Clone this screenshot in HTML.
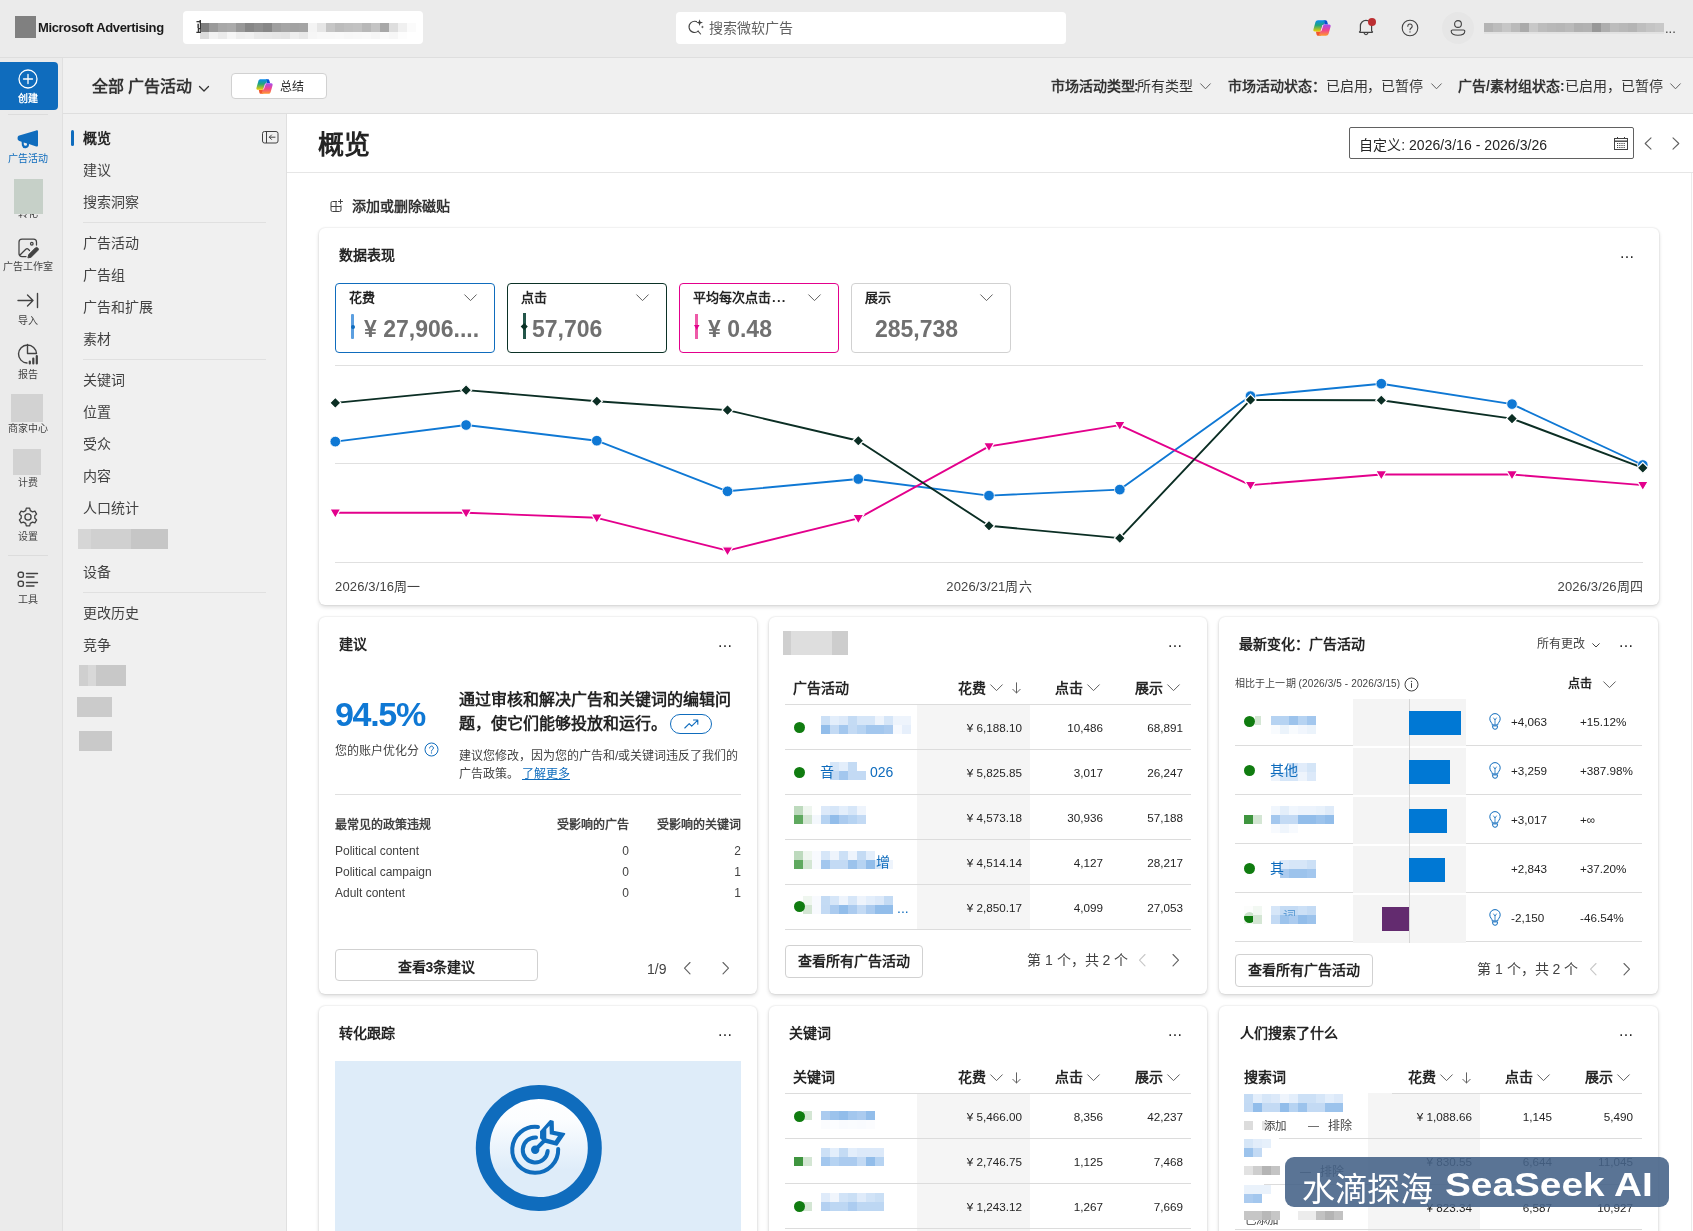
<!DOCTYPE html>
<html lang="zh-CN">
<head>
<meta charset="utf-8">
<title>Microsoft Advertising</title>
<style>
*{box-sizing:border-box;margin:0;padding:0}
html,body{width:1693px;height:1231px;overflow:hidden;background:#fff}
body{font-family:"Liberation Sans",sans-serif;color:#242424;font-size:14px;position:relative;will-change:transform}
.a{position:absolute}
.t{position:absolute;white-space:nowrap;line-height:1}
.b{font-weight:700}
svg{position:absolute;overflow:visible}
#topbar{left:0;top:0;width:1693px;height:58px;background:#ebebeb;border-bottom:1px solid #dedede}
#rail{left:0;top:58px;width:63px;height:1173px;background:#ebebeb;border-right:1px solid #e0e0e0}
#bar2{left:63px;top:58px;width:1630px;height:56px;background:#f0f0f0;border-bottom:1px solid #dedede}
#side{left:63px;top:114px;width:224px;height:1117px;background:#f0f0f0;border-right:1px solid #e0e0e0}
#main{left:287px;top:114px;width:1406px;height:1117px;background:#fff}
.nav{position:absolute;left:83px;font-size:14px;color:#424242;line-height:1;white-space:nowrap}
.blur{position:absolute;background:#cfcfcf}
.card{position:absolute;background:#fff;border-radius:6px;box-shadow:0 0 2px rgba(0,0,0,.14),0 2px 4px rgba(0,0,0,.14)}
.rl{position:absolute;font-size:10px;color:#424242;line-height:1;white-space:nowrap;text-align:center;width:63px;left:0}
.hl{position:absolute;height:1px;background:#e0e0e0}
.r{text-align:right}
.n12{font-size:12px;color:#242424}
</style>
</head>
<body>
<div id="topbar" class="a"></div>
<div id="rail" class="a"></div>
<div id="bar2" class="a"></div>
<div id="side" class="a"></div>
<div id="main" class="a"></div>
<div class="a" style="left:15px;top:16px;width:21px;height:22px;background:#808080"></div>
<div class="t b" style="left:38px;top:21px;font-size:13px;color:#1a1a1a;letter-spacing:-0.35px">Microsoft Advertising</div>
<div class="a" style="left:183px;top:11px;width:240px;height:33px;background:#fff;border-radius:4px"></div>
<div class="a" style="left:676px;top:12px;width:390px;height:32px;background:#fff;border-radius:4px"></div>
<svg style="left:687px;top:18px" width="18" height="18" viewBox="0 0 18 18" fill="none" stroke="#424242" stroke-width="1.1" stroke-linecap="round"><path d="M11.2 13.2 A5.6 5.6 0 1 1 9.5 3.6"/><path d="M11 13.2 L13.6 16"/><path d="M12.6 1.2 L13.4 3.8 L16 4.6 L13.4 5.4 L12.6 8 L11.8 5.4 L9.2 4.6 L11.8 3.8 Z" fill="#424242" stroke="none"/><path d="M15.4 7.4 L15.8 8.6 L17 9 L15.8 9.4 L15.4 10.6 L15 9.4 L13.8 9 L15 8.6 Z" fill="#424242" stroke="none"/></svg>
<div class="t" style="left:709px;top:21px;font-size:14px;color:#616161">搜索微软广告</div>
<svg style="left:0;top:0" width="1693" height="58"><rect x="200" y="23" width="9" height="9" fill="#7f7f7f"/><rect x="209" y="23" width="9" height="9" fill="#9a9a9a"/><rect x="218" y="23" width="9" height="9" fill="#a8a8a8"/><rect x="227" y="23" width="9" height="9" fill="#ababab"/><rect x="236" y="23" width="9" height="9" fill="#999999"/><rect x="245" y="23" width="9" height="9" fill="#878787"/><rect x="254" y="23" width="9" height="9" fill="#8f8f8f"/><rect x="263" y="23" width="9" height="9" fill="#878787"/><rect x="272" y="23" width="9" height="9" fill="#9f9f9f"/><rect x="281" y="23" width="9" height="9" fill="#a5a5a5"/><rect x="290" y="23" width="9" height="9" fill="#a2a2a2"/><rect x="299" y="23" width="9" height="9" fill="#a4a4a4"/><rect x="308" y="23" width="9" height="9" fill="#f4f4f4"/><rect x="317" y="23" width="9" height="9" fill="#e6e6e6"/><rect x="326" y="23" width="9" height="9" fill="#c6c6c6"/><rect x="335" y="23" width="9" height="9" fill="#bcbcbc"/><rect x="344" y="23" width="9" height="9" fill="#c0c0c0"/><rect x="353" y="23" width="9" height="9" fill="#c2c2c2"/><rect x="362" y="23" width="9" height="9" fill="#b8b8b8"/><rect x="371" y="23" width="9" height="9" fill="#c4c4c4"/><rect x="380" y="23" width="9" height="9" fill="#a8a8a8"/><rect x="389" y="23" width="9" height="9" fill="#dedede"/><rect x="398" y="23" width="9" height="9" fill="#f0f0f0"/><rect x="407" y="23" width="9" height="9" fill="#fbfbfb"/><rect x="200" y="32" width="9" height="7" fill="#dcdcdc"/><rect x="209" y="32" width="9" height="7" fill="#f2f2f2"/><rect x="218" y="32" width="9" height="7" fill="#ebebeb"/><rect x="227" y="32" width="9" height="7" fill="#f6f6f6"/><rect x="236" y="32" width="9" height="7" fill="#eeeeee"/><rect x="245" y="32" width="9" height="7" fill="#f0f0f0"/><rect x="254" y="32" width="9" height="7" fill="#e9e9e9"/><rect x="263" y="32" width="9" height="7" fill="#e8e8e8"/><rect x="272" y="32" width="9" height="7" fill="#e6e6e6"/><rect x="281" y="32" width="9" height="7" fill="#e4e4e4"/><rect x="290" y="32" width="9" height="7" fill="#eeeeee"/><rect x="299" y="32" width="9" height="7" fill="#e8e8e8"/><rect x="308" y="32" width="9" height="7" fill="#f6f6f6"/><rect x="317" y="32" width="9" height="7" fill="#f8f8f8"/><rect x="326" y="32" width="9" height="7" fill="#f8f8f8"/><rect x="335" y="32" width="9" height="7" fill="#f9f9f9"/><rect x="344" y="32" width="9" height="7" fill="#f7f7f7"/><rect x="353" y="32" width="9" height="7" fill="#f8f8f8"/><rect x="362" y="32" width="9" height="7" fill="#f9f9f9"/><rect x="371" y="32" width="9" height="7" fill="#f6f6f6"/><rect x="380" y="32" width="9" height="7" fill="#fafafa"/><rect x="389" y="32" width="9" height="7" fill="#f7f7f7"/><rect x="398" y="32" width="9" height="7" fill="#fdfdfd"/><rect x="407" y="32" width="9" height="7" fill="#ffffff"/><rect x="1484" y="23" width="9" height="9" fill="#b4b4b4"/><rect x="1493" y="23" width="9" height="9" fill="#bcbcbc"/><rect x="1502" y="23" width="9" height="9" fill="#c6c6c6"/><rect x="1511" y="23" width="9" height="9" fill="#bababa"/><rect x="1520" y="23" width="9" height="9" fill="#aaaaaa"/><rect x="1529" y="23" width="9" height="9" fill="#c8c8c8"/><rect x="1538" y="23" width="9" height="9" fill="#bcbcbc"/><rect x="1547" y="23" width="9" height="9" fill="#b8b8b8"/><rect x="1556" y="23" width="9" height="9" fill="#b6b6b6"/><rect x="1565" y="23" width="9" height="9" fill="#bababa"/><rect x="1574" y="23" width="9" height="9" fill="#b0b0b0"/><rect x="1583" y="23" width="9" height="9" fill="#b2b2b2"/><rect x="1592" y="23" width="9" height="9" fill="#989898"/><rect x="1601" y="23" width="9" height="9" fill="#aeaeae"/><rect x="1610" y="23" width="9" height="9" fill="#bcbcbc"/><rect x="1619" y="23" width="9" height="9" fill="#b8b8b8"/><rect x="1628" y="23" width="9" height="9" fill="#b4b4b4"/><rect x="1637" y="23" width="9" height="9" fill="#bebebe"/><rect x="1646" y="23" width="9" height="9" fill="#c4c4c4"/><rect x="1655" y="23" width="9" height="9" fill="#c8c8c8"/><rect x="1484" y="32" width="180" height="2" fill="#e2e2e2"/></svg>
<div class="t b" style="left:196px;top:20px;font-size:13px;color:#333;width:5px;overflow:hidden">蓝</div>
<!-- copilot -->
<svg style="left:1313px;top:20px" width="18" height="16" viewBox="0 0 18 16"><defs><linearGradient id="c1a" x1="0" y1="0" x2="0" y2="1"><stop offset="0" stop-color="#0a8cf0"/><stop offset=".45" stop-color="#22a67a"/><stop offset="1" stop-color="#f2cf00"/></linearGradient><linearGradient id="c1b" x1="0" y1="0" x2="0" y2="1"><stop offset="0" stop-color="#a64df0"/><stop offset=".5" stop-color="#f0458c"/><stop offset="1" stop-color="#ff9a2e"/></linearGradient></defs>
<path d="M10.5 0.300 H12.600 C13.600 0.300 14 1 14.300 2 L15 4.600 H11.500 Z" fill="#0a4fd0"/>
<path d="M5 15.800 C4.200 15.800 3.700 15.200 3.500 14.300 L2.900 11.400 H7.200 L7.800 15.800 Z" fill="#f2562a"/>
<path d="M5 0.300 H11 C11.800 0.300 12 1 11.700 1.900 L9 10 C8.700 11 8 11.500 7 11.500 H1.800 C0.700 11.500 0.100 10.600 0.400 9.500 L2.400 2.300 C2.800 1 3.700 0.300 5 0.300 Z" fill="url(#c1a)"/>
<path d="M13 15.800 H7 C6.200 15.800 6 15.100 6.300 14.200 L9 6.100 C9.300 5.100 10 4.600 11 4.600 H16.200 C17.300 4.600 17.900 5.500 17.600 6.600 L15.600 13.800 C15.200 15.100 14.300 15.800 13 15.800 Z" fill="url(#c1b)"/>
<path d="M9.600 5.200 L10.600 4.600 L8.400 10.900 L7.400 11.500 Z" fill="#fff" opacity=".95"/></svg>
<!-- bell -->
<svg style="left:1357px;top:19px" width="18" height="20" viewBox="0 0 18 20" fill="none" stroke="#424242" stroke-width="1.2" stroke-linejoin="round"><path d="M3.400 11.800 V7 a5.600 5.600 0 0 1 11.200 0 v4.800 l.9 1 q.2 .5 -.4 .5 H2.900 q-.6 0 -.4 -.5 Z"/><path d="M7 14 q2 3.500 4 0"/></svg>
<div class="a" style="left:1368px;top:18px;width:8px;height:8px;border-radius:50%;background:#bc2f32"></div>
<!-- help -->
<svg style="left:1401px;top:19px" width="18" height="18" viewBox="0 0 18 18" fill="none" stroke="#424242" stroke-width="1.1"><circle cx="9" cy="9" r="7.800"/><path d="M6.800 7.200 a2.200 2.200 0 1 1 3.400 1.800 c-.8 .5 -1.200 .9 -1.200 1.800" stroke-linecap="round"/><circle cx="9" cy="12.900" r=".7" fill="#424242" stroke="none"/></svg>
<!-- avatar -->
<div class="a" style="left:1442px;top:12px;width:32px;height:32px;border-radius:50%;background:#e6e6e6"></div>
<svg style="left:1450px;top:19px" width="16" height="18" viewBox="0 0 16 18" fill="none" stroke="#424242" stroke-width="1.1"><circle cx="8" cy="5" r="3.400"/><path d="M2.500 11 h11 a1.300 1.300 0 0 1 1.300 1.300 c0 2.600 -2.800 4 -6.800 4 s-6.800 -1.400 -6.800 -4 A1.300 1.300 0 0 1 2.500 11Z"/></svg>
<div class="t" style="left:1665px;top:22px;font-size:13px;color:#424242">...</div>
<!-- bar2 -->
<div class="a" style="left:0;top:62px;width:58px;height:48px;background:#0f6cbd;border-radius:0 4px 4px 0"></div>
<svg style="left:18px;top:69px" width="20" height="20" viewBox="0 0 20 20" fill="none" stroke="#fff" stroke-width="1.300" stroke-linecap="round"><circle cx="10" cy="10" r="9"/><path d="M10 5.500 V14.500 M5.500 10 H14.500"/></svg>
<div class="t b" style="left:0;width:56px;text-align:center;top:94px;font-size:10px;color:#fff">创建</div>
<div class="t b" style="left:92px;top:79px;font-size:16px;color:#333">全部 广告活动</div>
<svg style="left:198px;top:85px" width="12" height="8" viewBox="0 0 12 8" fill="none" stroke="#333" stroke-width="1.300" stroke-linecap="round" stroke-linejoin="round"><path d="M1.500 1.500 L6 6 L10.500 1.500"/></svg>
<div class="a" style="left:231px;top:73px;width:96px;height:26px;background:#fff;border:1px solid #d1d1d1;border-radius:4px"></div>
<svg style="left:256px;top:79px" width="17" height="15" viewBox="0 0 18 16"><defs><linearGradient id="c2a" x1="0" y1="0" x2="0" y2="1"><stop offset="0" stop-color="#0a8cf0"/><stop offset=".45" stop-color="#22a67a"/><stop offset="1" stop-color="#f2cf00"/></linearGradient><linearGradient id="c2b" x1="0" y1="0" x2="0" y2="1"><stop offset="0" stop-color="#a64df0"/><stop offset=".5" stop-color="#f0458c"/><stop offset="1" stop-color="#ff9a2e"/></linearGradient></defs>
<path d="M10.5 0.300 H12.600 C13.600 0.300 14 1 14.300 2 L15 4.600 H11.500 Z" fill="#0a4fd0"/>
<path d="M5 15.800 C4.200 15.800 3.700 15.200 3.500 14.300 L2.900 11.400 H7.200 L7.800 15.800 Z" fill="#f2562a"/>
<path d="M5 0.300 H11 C11.800 0.300 12 1 11.700 1.900 L9 10 C8.700 11 8 11.500 7 11.500 H1.800 C0.700 11.500 0.100 10.600 0.400 9.500 L2.400 2.300 C2.800 1 3.700 0.300 5 0.300 Z" fill="url(#c2a)"/>
<path d="M13 15.800 H7 C6.200 15.800 6 15.100 6.300 14.200 L9 6.100 C9.300 5.100 10 4.600 11 4.600 H16.200 C17.300 4.600 17.900 5.500 17.600 6.600 L15.600 13.800 C15.200 15.100 14.300 15.800 13 15.800 Z" fill="url(#c2b)"/>
<path d="M9.600 5.200 L10.600 4.600 L8.400 10.900 L7.400 11.500 Z" fill="#fff" opacity=".95"/></svg>
<div class="t" style="left:280px;top:81px;font-size:12px;color:#242424">总结</div>
<div class="t" style="left:1051px;top:79px;font-size:14px;color:#333"><span class="b">市场活动类型<span style="margin-left:-1px;margin-right:-1.300px">:</span></span>所有类型</div>
<svg style="left:1200px;top:83px" width="11" height="7" viewBox="0 0 11 7" fill="none" stroke="#616161" stroke-width="1" stroke-linecap="round" stroke-linejoin="round"><path d="M.7 .8 L5.500 5.800 L10.300 .8"/></svg>
<div class="t" style="left:1228px;top:79px;font-size:14px;color:#333"><span class="b">市场活动状态：</span><span style="letter-spacing:-.2px">已启用，已暂停</span></div>
<svg style="left:1431px;top:83px" width="11" height="7" viewBox="0 0 11 7" fill="none" stroke="#616161" stroke-width="1" stroke-linecap="round" stroke-linejoin="round"><path d="M.7 .8 L5.500 5.800 L10.300 .8"/></svg>
<div class="t" style="left:1458px;top:79px;font-size:14px;color:#333"><span class="b">广告/素材组状态:</span>已启用，已暂停</div>
<svg style="left:1670px;top:83px" width="11" height="7" viewBox="0 0 11 7" fill="none" stroke="#616161" stroke-width="1" stroke-linecap="round" stroke-linejoin="round"><path d="M.7 .8 L5.500 5.800 L10.300 .8"/></svg>

<div class="hl" style="left:8px;top:114px;width:40px;background:#dcdcdc"></div>
<!-- megaphone -->
<svg style="left:17px;top:130px" width="22" height="18" viewBox="0 0 22 18"><path d="M19.200 0.400 C20.200 0 21 0.600 21 1.600 V15.200 C21 16.200 20.200 16.800 19.200 16.400 L12 14 V14.600 A3.600 3.600 0 0 1 4.900 15.400 L4.600 11.700 L2.300 11 C1.300 10.700 0.600 9.800 0.600 8.800 V7.800 C0.600 6.800 1.300 5.900 2.300 5.600 Z M6.700 12.400 L6.900 14.700 A1.600 1.600 0 0 0 10 14.400 V13.400 Z" fill="#0f6cbd" fill-rule="evenodd"/></svg>
<div class="rl" style="top:154px;color:#0f6cbd;width:56px">广告活动</div>
<div class="t" style="left:18px;top:209px;font-size:10px;color:#424242">转化</div>
<div class="a" style="left:14px;top:179px;width:29px;height:35px;background:#c6d0c8"></div>
<!-- ad studio -->
<svg style="left:17px;top:237px" width="22" height="22" viewBox="0 0 22 22" fill="none" stroke="#424242" stroke-width="1.250" stroke-linecap="round" stroke-linejoin="round"><path d="M9 19.500 H5 A3 3 0 0 1 2 16.500 V5 A3 3 0 0 1 5 2 H16.500 A3 3 0 0 1 19.500 5 V8"/><circle cx="14.800" cy="6.700" r="1.300"/><path d="M3 18 L8.800 12.300 A1.800 1.800 0 0 1 11.300 12.300 L12.500 13.500"/><path d="M11 20.500 L11.800 17.500 L18.300 11 A1.700 1.700 0 0 1 20.800 13.500 L14.300 20 Z" fill="#424242" stroke-width="1"/></svg>
<div class="rl" style="top:262px;width:56px">广告工作室</div>
<!-- import -->
<svg style="left:17px;top:292px" width="22" height="18" viewBox="0 0 22 18" fill="none" stroke="#424242" stroke-width="1.400" stroke-linecap="round" stroke-linejoin="round"><path d="M1 8.500 H16 M10.500 3 L16 8.500 L10.500 14 M20.500 1.500 V15.500"/></svg>
<div class="rl" style="top:316px;width:56px">导入</div>
<!-- report -->
<svg style="left:17px;top:343px" width="23" height="23" viewBox="0 0 23 23" fill="none" stroke="#424242" stroke-width="1.400" stroke-linecap="round" stroke-linejoin="round"><path d="M10 20 A9 9 0 1 1 19.500 10.500 H10.500 V1.500"/><path d="M12.800 20.500 V18.500 M16.300 20.500 V15.500 M19.800 20.500 V13" stroke-width="2.200"/></svg>
<div class="rl" style="top:370px;width:56px">报告</div>
<div class="a" style="left:11px;top:394px;width:32px;height:28px;background:#d2d2d2"></div>
<div class="rl" style="top:424px;width:56px">商家中心</div>
<div class="a" style="left:13px;top:449px;width:28px;height:26px;background:#d2d2d2"></div>
<div class="rl" style="top:478px;width:56px">计费</div>
<!-- gear -->
<svg style="left:18px;top:507px" width="20" height="20" viewBox="0 0 20 20" fill="none" stroke="#424242" stroke-width="1.300" stroke-linejoin="round"><path d="M8.300 1.200 L7.700 3.600 L5.500 4.900 L3.100 4.200 L1.400 7.100 L3.200 8.800 V11.200 L1.400 12.900 L3.100 15.800 L5.500 15.100 L7.700 16.400 L8.300 18.800 H11.700 L12.300 16.400 L14.500 15.100 L16.900 15.800 L18.600 12.900 L16.800 11.200 V8.800 L18.600 7.100 L16.900 4.200 L14.500 4.900 L12.300 3.600 L11.700 1.200 Z"/><circle cx="10" cy="10" r="3.100"/></svg>
<div class="rl" style="top:532px;width:56px">设置</div>
<div class="hl" style="left:8px;top:555px;width:40px;background:#dcdcdc"></div>
<!-- tools -->
<svg style="left:17px;top:571px" width="22" height="18" viewBox="0 0 22 18" fill="none" stroke="#424242" stroke-width="1.400" stroke-linecap="round"><rect x="1.200" y="1.200" width="5.200" height="5.200" rx="1.800"/><rect x="1.200" y="10.200" width="5.200" height="5.200" rx="1.800"/><path d="M9.500 2.500 H20.500 M9.500 6 H17 M9.500 11.500 H20.500 M9.500 15 H17"/></svg>
<div class="rl" style="top:595px;width:56px">工具</div>

<div class="a" style="left:71px;top:130px;width:3px;height:16px;border-radius:2px;background:#0f6cbd"></div>
<div class="nav b" style="top:131px;color:#242424">概览</div>
<svg style="left:262px;top:131px" width="17" height="13" viewBox="0 0 17 13" fill="none" stroke="#424242" stroke-width="1"><rect x=".5" y=".5" width="15.500" height="11.500" rx="2"/><path d="M4.500 .5 V12"/><path d="M13 6.200 H7.500 M9.500 4 L7.300 6.200 L9.500 8.400" stroke-linecap="round" stroke-linejoin="round"/></svg>
<div class="nav" style="top:163px">建议</div>
<div class="nav" style="top:195px">搜索洞察</div>
<div class="hl" style="left:83px;top:222px;width:183px"></div>
<div class="nav" style="top:236px">广告活动</div>
<div class="nav" style="top:268px">广告组</div>
<div class="nav" style="top:300px">广告和扩展</div>
<div class="nav" style="top:332px">素材</div>
<div class="hl" style="left:83px;top:359px;width:183px"></div>
<div class="nav" style="top:373px">关键词</div>
<div class="nav" style="top:405px">位置</div>
<div class="nav" style="top:437px">受众</div>
<div class="nav" style="top:469px">内容</div>
<div class="nav" style="top:501px">人口统计</div>
<div class="a" style="left:78px;top:529px;width:90px;height:20px;background:linear-gradient(90deg,#d6d6d6 0 14%,#d0d0d0 14% 59%,#c6c6c6 59%)"></div>
<div class="nav" style="top:565px">设备</div>
<div class="hl" style="left:83px;top:592px;width:183px"></div>
<div class="nav" style="top:606px">更改历史</div>
<div class="nav" style="top:638px">竞争</div>
<div class="a" style="left:79px;top:665px;width:47px;height:21px;background:linear-gradient(90deg,#cfcfcf 0 19%,#d8d8d8 19% 36%,#c8c8c8 36%)"></div>
<div class="a" style="left:77px;top:697px;width:35px;height:20px;background:#cbcbcb"></div>
<div class="a" style="left:79px;top:731px;width:33px;height:20px;background:#c9c9c9"></div>

<div class="t b" style="left:318px;top:132px;font-size:26px;color:#242424">概览</div>
<div class="hl" style="left:287px;top:172px;width:1406px;background:#e6e6e6"></div>
<div class="a" style="left:1349px;top:127px;width:285px;height:32px;border:1px solid #616161;border-radius:2px;background:#fff"></div>
<div class="t" style="left:1359px;top:137.500px;font-size:14px;letter-spacing:.05px;color:#242424">自定义: 2026/3/16 - 2026/3/26</div>
<svg style="left:1614px;top:137px" width="14" height="13" viewBox="0 0 14 13" fill="none" stroke="#424242" stroke-width="1"><rect x=".5" y="1.500" width="13" height="11"/><path d="M.5 4.200 H13.500" stroke-width="1.400"/><path d="M3.500 0 V2 M10.500 0 V2"/><path d="M3 6.500 H11 M3 8.500 H11 M3 10.500 H11" stroke-dasharray="1.200 1" stroke-width="1.100"/></svg>
<svg style="left:1644px;top:137px" width="8" height="13" viewBox="0 0 8 13" fill="none" stroke="#616161" stroke-width="1.100" stroke-linecap="round" stroke-linejoin="round"><path d="M7 .8 L1.200 6.500 L7 12.200"/></svg>
<svg style="left:1672px;top:137px" width="8" height="13" viewBox="0 0 8 13" fill="none" stroke="#616161" stroke-width="1.100" stroke-linecap="round" stroke-linejoin="round"><path d="M1 .8 L6.800 6.500 L1 12.200"/></svg>
<svg style="left:330px;top:199px" width="14" height="14" viewBox="0 0 14 14" fill="none" stroke="#424242" stroke-width="1"><path d="M7 2.500 H2.500 A1.500 1.500 0 0 0 1 4 V11 A1.500 1.500 0 0 0 2.500 12.500 H9.500 A1.500 1.500 0 0 0 11 11 V6.500" /><path d="M1 7.500 H11 M6 2.500 V12.500"/><path d="M10.500 0.500 V4.500 M8.500 2.500 H12.500" stroke-linecap="round"/></svg>
<div class="t b" style="left:352px;top:199px;font-size:14px;color:#333">添加或删除磁贴</div>
<div class="a" style="left:1691px;top:173px;width:1px;height:1058px;background:#ececec"></div>

<div class="card" style="left:319px;top:228px;width:1340px;height:377px"></div>
<div class="t b" style="left:339px;top:248px;font-size:14px;color:#242424">数据表现</div>
<div class="t" style="left:1620px;top:245px;font-size:16px;color:#242424;letter-spacing:.3px">...</div>
<div class="a" style="left:335px;top:283px;width:160px;height:70px;border:1px solid #0f6cbd;border-radius:4px;background:#fff"></div>
<div class="t b" style="left:349px;top:291px;font-size:13px;color:#242424">花费</div>
<svg style="left:464px;top:294px" width="13" height="8" viewBox="0 0 13 8" fill="none" stroke="#616161" stroke-width="1" stroke-linecap="round" stroke-linejoin="round"><path d="M.7 .8 L6.500 6.600 L12.300 .8"/></svg>
<div class="t b" style="left:364px;top:318px;font-size:23px;color:#707070">¥ 27,906....</div>
<div class="a" style="left:507px;top:283px;width:160px;height:70px;border:1px solid #0b3226;border-radius:4px;background:#fff"></div>
<div class="t b" style="left:521px;top:291px;font-size:13px;color:#242424">点击</div>
<svg style="left:636px;top:294px" width="13" height="8" viewBox="0 0 13 8" fill="none" stroke="#616161" stroke-width="1" stroke-linecap="round" stroke-linejoin="round"><path d="M.7 .8 L6.500 6.600 L12.300 .8"/></svg>
<div class="t b" style="left:532px;top:318px;font-size:23px;color:#707070">57,706</div>
<div class="a" style="left:679px;top:283px;width:160px;height:70px;border:1px solid #e3008c;border-radius:4px;background:#fff"></div>
<div class="t b" style="left:693px;top:291px;font-size:13px;color:#242424">平均每次点击<span style="letter-spacing:1.300px;margin-left:1px">...</span></div>
<svg style="left:808px;top:294px" width="13" height="8" viewBox="0 0 13 8" fill="none" stroke="#616161" stroke-width="1" stroke-linecap="round" stroke-linejoin="round"><path d="M.7 .8 L6.500 6.600 L12.300 .8"/></svg>
<div class="t b" style="left:708px;top:318px;font-size:23px;color:#707070">¥ 0.48</div>
<div class="a" style="left:851px;top:283px;width:160px;height:70px;border:1px solid #d1d1d1;border-radius:4px;background:#fff"></div>
<div class="t b" style="left:865px;top:291px;font-size:13px;color:#242424">展示</div>
<svg style="left:980px;top:294px" width="13" height="8" viewBox="0 0 13 8" fill="none" stroke="#616161" stroke-width="1" stroke-linecap="round" stroke-linejoin="round"><path d="M.7 .8 L6.500 6.600 L12.300 .8"/></svg>
<div class="t b" style="left:875px;top:318px;font-size:23px;color:#707070">285,738</div>
<div class="a" style="left:351px;top:314px;width:3px;height:25px;background:#5c9fe0;border-radius:1px"></div><div class="a" style="left:350.500px;top:324.500px;width:4px;height:4px;border-radius:50%;background:#0f6cbd"></div>
<div class="a" style="left:523px;top:313px;width:2.500px;height:26px;background:#24564a"></div><div class="a" style="left:522px;top:324px;width:4.500px;height:4.500px;background:#0b3226;transform:rotate(45deg)"></div>
<div class="a" style="left:695px;top:314px;width:2.500px;height:25px;background:#ee5aa8"></div><svg style="left:693.500px;top:325px" width="5.500" height="5" viewBox="0 0 8 7"><path d="M0 0 H8 L4 7 Z" fill="#e3008c"/></svg>
<svg style="left:0;top:0" width="1693" height="1231" viewBox="0 0 1693 1231"><path d="M335 365.5 H1643" stroke="#e0e0e0" stroke-width="1"/><path d="M335 463.5 H1643" stroke="#e0e0e0" stroke-width="1"/><path d="M335 562.5 H1643" stroke="#e0e0e0" stroke-width="1"/><polyline fill="none" stroke="#0f78d4" stroke-width="1.9" stroke-linejoin="round" points="335.3,441.6 466.1,425.0 596.8,440.7 727.5,491.3 858.3,479.0 989.0,495.6 1119.8,489.6 1250.5,396.1 1381.3,383.7 1512.0,404.1 1642.8,465.0"/><polyline fill="none" stroke="#e3008c" stroke-width="1.9" stroke-linejoin="round" points="335.3,512.7 466.1,512.7 596.8,517.8 727.5,550.6 858.3,518.3 989.0,446.4 1119.8,425.1 1250.5,485.1 1381.3,474.5 1512.0,474.5 1642.8,485.1"/><polyline fill="none" stroke="#0b2e24" stroke-width="1.9" stroke-linejoin="round" points="335.3,402.9 466.1,390.1 596.8,401.2 727.5,410.1 858.3,440.7 989.0,525.8 1119.8,538.1 1250.5,399.9 1381.3,400.3 1512.0,418.6 1642.8,467.9"/><circle cx="335.3" cy="441.6" r="5.3" fill="#0f78d4" stroke="#fff" stroke-width=".8"/><circle cx="466.1" cy="425.0" r="5.3" fill="#0f78d4" stroke="#fff" stroke-width=".8"/><circle cx="596.8" cy="440.7" r="5.3" fill="#0f78d4" stroke="#fff" stroke-width=".8"/><circle cx="727.5" cy="491.3" r="5.3" fill="#0f78d4" stroke="#fff" stroke-width=".8"/><circle cx="858.3" cy="479.0" r="5.3" fill="#0f78d4" stroke="#fff" stroke-width=".8"/><circle cx="989.0" cy="495.6" r="5.3" fill="#0f78d4" stroke="#fff" stroke-width=".8"/><circle cx="1119.8" cy="489.6" r="5.3" fill="#0f78d4" stroke="#fff" stroke-width=".8"/><circle cx="1250.5" cy="396.1" r="5.3" fill="#0f78d4" stroke="#fff" stroke-width=".8"/><circle cx="1381.3" cy="383.7" r="5.3" fill="#0f78d4" stroke="#fff" stroke-width=".8"/><circle cx="1512.0" cy="404.1" r="5.3" fill="#0f78d4" stroke="#fff" stroke-width=".8"/><circle cx="1642.8" cy="465.0" r="5.3" fill="#0f78d4" stroke="#fff" stroke-width=".8"/><path d="M329.8 508.9 h11 l-5.500 9.300 Z" fill="#e3008c" stroke="#fff" stroke-width="1.2"/><path d="M460.6 508.9 h11 l-5.500 9.300 Z" fill="#e3008c" stroke="#fff" stroke-width="1.2"/><path d="M591.3 514.0 h11 l-5.500 9.300 Z" fill="#e3008c" stroke="#fff" stroke-width="1.2"/><path d="M722.0 546.8 h11 l-5.500 9.300 Z" fill="#e3008c" stroke="#fff" stroke-width="1.2"/><path d="M852.8 514.5 h11 l-5.500 9.300 Z" fill="#e3008c" stroke="#fff" stroke-width="1.2"/><path d="M983.5 442.6 h11 l-5.500 9.300 Z" fill="#e3008c" stroke="#fff" stroke-width="1.2"/><path d="M1114.3 421.3 h11 l-5.500 9.300 Z" fill="#e3008c" stroke="#fff" stroke-width="1.2"/><path d="M1245.0 481.3 h11 l-5.500 9.300 Z" fill="#e3008c" stroke="#fff" stroke-width="1.2"/><path d="M1375.8 470.7 h11 l-5.500 9.300 Z" fill="#e3008c" stroke="#fff" stroke-width="1.2"/><path d="M1506.5 470.7 h11 l-5.500 9.300 Z" fill="#e3008c" stroke="#fff" stroke-width="1.2"/><path d="M1637.3 481.3 h11 l-5.500 9.300 Z" fill="#e3008c" stroke="#fff" stroke-width="1.2"/><path d="M329.8 402.9 l5.500 -5.500 l5.500 5.500 l-5.500 5.500 Z" fill="#0b2e24" stroke="#fff" stroke-width="1.3"/><path d="M460.6 390.1 l5.500 -5.500 l5.500 5.500 l-5.500 5.500 Z" fill="#0b2e24" stroke="#fff" stroke-width="1.3"/><path d="M591.3 401.2 l5.500 -5.500 l5.500 5.500 l-5.500 5.500 Z" fill="#0b2e24" stroke="#fff" stroke-width="1.3"/><path d="M722.0 410.1 l5.500 -5.500 l5.500 5.500 l-5.500 5.500 Z" fill="#0b2e24" stroke="#fff" stroke-width="1.3"/><path d="M852.8 440.7 l5.500 -5.500 l5.500 5.500 l-5.500 5.500 Z" fill="#0b2e24" stroke="#fff" stroke-width="1.3"/><path d="M983.5 525.8 l5.500 -5.500 l5.500 5.500 l-5.500 5.500 Z" fill="#0b2e24" stroke="#fff" stroke-width="1.3"/><path d="M1114.3 538.1 l5.500 -5.500 l5.500 5.500 l-5.500 5.500 Z" fill="#0b2e24" stroke="#fff" stroke-width="1.3"/><path d="M1245.0 399.9 l5.500 -5.500 l5.500 5.500 l-5.500 5.500 Z" fill="#0b2e24" stroke="#fff" stroke-width="1.3"/><path d="M1375.8 400.3 l5.500 -5.500 l5.500 5.500 l-5.500 5.500 Z" fill="#0b2e24" stroke="#fff" stroke-width="1.3"/><path d="M1506.5 418.6 l5.500 -5.500 l5.500 5.500 l-5.500 5.500 Z" fill="#0b2e24" stroke="#fff" stroke-width="1.3"/><path d="M1637.3 467.9 l5.500 -5.500 l5.500 5.500 l-5.500 5.500 Z" fill="#0b2e24" stroke="#fff" stroke-width="1.3"/></svg>
<div class="t" style="left:335px;top:580px;font-size:13px;letter-spacing:.15px;color:#424242">2026/3/16周一</div>
<div class="t" style="left:889px;width:200px;text-align:center;top:580px;font-size:13px;letter-spacing:.15px;color:#424242">2026/3/21周六</div>
<div class="t r" style="left:1443px;width:200px;top:580px;font-size:13px;letter-spacing:.15px;color:#424242">2026/3/26周四</div>

<div class="card" style="left:319px;top:617px;width:438px;height:377px"></div>
<div class="t b" style="left:339px;top:637px;font-size:14px;color:#242424">建议</div>
<div class="t" style="left:718px;top:634px;font-size:16px;color:#242424;letter-spacing:.3px">...</div>
<div class="t b" style="left:335px;top:697px;font-size:34px;color:#0f78d4;letter-spacing:-1.300px">94.5%</div>
<div class="t" style="left:335px;top:745px;font-size:12px;color:#424242">您的账户优化分</div>
<svg style="left:424px;top:742px" width="15" height="15" viewBox="0 0 15 15" fill="none" stroke="#0f6cbd" stroke-width="1"><circle cx="7.500" cy="7.500" r="6.500"/><path d="M5.600 6 a1.900 1.900 0 1 1 2.900 1.600 c-.7 .4 -1 .8 -1 1.500" stroke-linecap="round"/><circle cx="7.500" cy="10.900" r=".65" fill="#0f6cbd" stroke="none"/></svg>
<div class="a b" style="left:459px;top:688px;width:290px;font-size:16px;line-height:24px;color:#242424;white-space:nowrap">通过审核和解决广告和关键词的编辑问<br>题，使它们能够投放和运行。</div>
<div class="a" style="left:670px;top:714px;width:42px;height:20px;border:1px solid #0f6cbd;border-radius:10px"></div>
<svg style="left:684px;top:719px" width="15" height="10" viewBox="0 0 15 10" fill="none" stroke="#0f6cbd" stroke-width="1.100" stroke-linecap="round" stroke-linejoin="round"><path d="M.8 9 L5.200 4.600 L7.700 7.100 L13.500 1.300 M9.500 1 H13.800 V5.300"/></svg>
<div class="a" style="left:459px;top:747px;width:290px;font-size:12px;line-height:18px;color:#424242;white-space:nowrap">建议您修改，因为您的广告和/或关键词违反了我们的<br>广告政策。<span style="color:#0f6cbd;text-decoration:underline;margin-left:3px">了解更多</span></div>
<div class="hl" style="left:335px;top:794px;width:406px"></div>
<div class="t b" style="left:335px;top:819px;font-size:12px;color:#424242">最常见的政策违规</div>
<div class="t b r" style="left:529px;width:100px;top:819px;font-size:12px;color:#424242">受影响的广告</div>
<div class="t b r" style="left:641px;width:100px;top:819px;font-size:12px;color:#424242">受影响的关键词</div>
<div class="t" style="left:335px;top:845px;font-size:12px;color:#424242">Political content</div>
<div class="t" style="left:335px;top:866px;font-size:12px;color:#424242">Political campaign</div>
<div class="t" style="left:335px;top:887px;font-size:12px;color:#424242">Adult content</div>
<div class="t r" style="left:529px;width:100px;top:845px;font-size:12px;color:#424242">0</div>
<div class="t r" style="left:529px;width:100px;top:866px;font-size:12px;color:#424242">0</div>
<div class="t r" style="left:529px;width:100px;top:887px;font-size:12px;color:#424242">0</div>
<div class="t r" style="left:641px;width:100px;top:845px;font-size:12px;color:#424242">2</div>
<div class="t r" style="left:641px;width:100px;top:866px;font-size:12px;color:#424242">1</div>
<div class="t r" style="left:641px;width:100px;top:887px;font-size:12px;color:#424242">1</div>
<div class="a" style="left:335px;top:949px;width:203px;height:32px;border:1px solid #d1d1d1;border-radius:4px;background:#fff"></div>
<div class="t b" style="left:335px;width:203px;text-align:center;top:960px;font-size:14px;color:#242424">查看3条建议</div>
<div class="t" style="left:647px;top:962px;font-size:14px;color:#424242">1/9</div>
<svg style="left:683px;top:961px" width="9" height="15" viewBox="0 0 9 15" fill="none" stroke="#616161" stroke-width="1.100" stroke-linecap="round" stroke-linejoin="round"><path d="M7 1.500 L1.500 7.200 L7 12.900"/></svg>
<svg style="left:721px;top:961px" width="9" height="15" viewBox="0 0 9 15" fill="none" stroke="#616161" stroke-width="1.100" stroke-linecap="round" stroke-linejoin="round"><path d="M2 1.500 L7.500 7.200 L2 12.900"/></svg>

<div class="card" style="left:769px;top:617px;width:438px;height:377px"></div>
<div class="a" style="left:783px;top:631px;width:65px;height:24px;background:linear-gradient(90deg,#cfcfcf 0 13%,#dedede 13% 75%,#cdcdcd 75%)"></div>
<div class="t " style="left:1168px;top:634px;font-size:16px;color:#242424;letter-spacing:.3px">...</div>
<div class="t b" style="left:793px;top:681px;font-size:14px;color:#242424;">广告活动</div>
<div class="t b" style="left:958px;top:681px;font-size:14px;color:#242424;">花费</div>
<svg style="left:990px;top:684px" width="13" height="8" viewBox="0 0 13 8" fill="none" stroke="#616161" stroke-width="1" stroke-linecap="round" stroke-linejoin="round"><path d="M.7 .8 L6.500 6.600 L12.300 .8"/></svg>
<svg style="left:1012px;top:682px" width="9" height="12" viewBox="0 0 9 12" fill="none" stroke="#616161" stroke-width="1" stroke-linecap="round" stroke-linejoin="round"><path d="M4.500 .8 V11 M.8 7.300 L4.500 11 L8.200 7.300"/></svg>
<div class="t b" style="left:1055px;top:681px;font-size:14px;color:#242424;">点击</div>
<svg style="left:1087px;top:684px" width="13" height="8" viewBox="0 0 13 8" fill="none" stroke="#616161" stroke-width="1" stroke-linecap="round" stroke-linejoin="round"><path d="M.7 .8 L6.500 6.600 L12.300 .8"/></svg>
<div class="t b" style="left:1135px;top:681px;font-size:14px;color:#242424;">展示</div>
<svg style="left:1167px;top:684px" width="13" height="8" viewBox="0 0 13 8" fill="none" stroke="#616161" stroke-width="1" stroke-linecap="round" stroke-linejoin="round"><path d="M.7 .8 L6.500 6.600 L12.300 .8"/></svg>
<div class="a" style="left:917px;top:704px;width:113px;height:225px;background:#f5f5f5"></div>
<div class="hl" style="left:785px;top:704px;width:406px;background:#dcdcdc"></div>
<div class="hl" style="left:785px;top:749px;width:406px;background:#dcdcdc"></div>
<div class="hl" style="left:785px;top:794px;width:406px;background:#dcdcdc"></div>
<div class="hl" style="left:785px;top:839px;width:406px;background:#dcdcdc"></div>
<div class="hl" style="left:785px;top:884px;width:406px;background:#dcdcdc"></div>
<div class="hl" style="left:785px;top:929px;width:406px;background:#dcdcdc"></div>
<div class="t r " style="left:902px;width:120px;top:722px;font-size:11.7px;color:#242424">¥ 6,188.10</div>
<div class="t r " style="left:983px;width:120px;top:722px;font-size:11.7px;color:#242424">10,486</div>
<div class="t r " style="left:1063px;width:120px;top:722px;font-size:11.7px;color:#242424">68,891</div>
<div class="t r " style="left:902px;width:120px;top:767px;font-size:11.7px;color:#242424">¥ 5,825.85</div>
<div class="t r " style="left:983px;width:120px;top:767px;font-size:11.7px;color:#242424">3,017</div>
<div class="t r " style="left:1063px;width:120px;top:767px;font-size:11.7px;color:#242424">26,247</div>
<div class="t r " style="left:902px;width:120px;top:812px;font-size:11.7px;color:#242424">¥ 4,573.18</div>
<div class="t r " style="left:983px;width:120px;top:812px;font-size:11.7px;color:#242424">30,936</div>
<div class="t r " style="left:1063px;width:120px;top:812px;font-size:11.7px;color:#242424">57,188</div>
<div class="t r " style="left:902px;width:120px;top:857px;font-size:11.7px;color:#242424">¥ 4,514.14</div>
<div class="t r " style="left:983px;width:120px;top:857px;font-size:11.7px;color:#242424">4,127</div>
<div class="t r " style="left:1063px;width:120px;top:857px;font-size:11.7px;color:#242424">28,217</div>
<div class="t r " style="left:902px;width:120px;top:902px;font-size:11.7px;color:#242424">¥ 2,850.17</div>
<div class="t r " style="left:983px;width:120px;top:902px;font-size:11.7px;color:#242424">4,099</div>
<div class="t r " style="left:1063px;width:120px;top:902px;font-size:11.7px;color:#242424">27,053</div>
<svg style="left:0;top:0" width="1693" height="1231"><rect x="821" y="716" width="9" height="9" fill="#cce0f6"/><rect x="830" y="716" width="9" height="9" fill="#e3eefb"/><rect x="839" y="716" width="9" height="9" fill="#dce9f9"/><rect x="848" y="716" width="9" height="9" fill="#c4dbf4"/><rect x="857" y="716" width="9" height="9" fill="#d6e6f8"/><rect x="866" y="716" width="9" height="9" fill="#d6e6f8"/><rect x="875" y="716" width="9" height="9" fill="#eef4fc"/><rect x="884" y="716" width="9" height="9" fill="#d6e6f8"/><rect x="821" y="725" width="9" height="9" fill="#92bdea"/><rect x="830" y="725" width="9" height="9" fill="#c3daf4"/><rect x="839" y="725" width="9" height="9" fill="#a3c7ee"/><rect x="848" y="725" width="9" height="9" fill="#c3daf4"/><rect x="857" y="725" width="9" height="9" fill="#b6d3f2"/><rect x="866" y="725" width="9" height="9" fill="#a3c7ee"/><rect x="875" y="725" width="9" height="9" fill="#a3c7ee"/><rect x="884" y="725" width="9" height="9" fill="#abcbef"/><rect x="893" y="716" width="9" height="9" fill="#eef4fc"/><rect x="902" y="716" width="9" height="9" fill="#eef4fc"/><rect x="893" y="725" width="9" height="9" fill="#f6f9fe"/><rect x="902" y="725" width="9" height="9" fill="#e6effb"/><rect x="830" y="762" width="9" height="9" fill="#d6e6f8"/><rect x="839" y="762" width="9" height="9" fill="#e3eefb"/><rect x="848" y="762" width="9" height="9" fill="#c4dbf4"/><rect x="857" y="762" width="9" height="9" fill="#c4dbf4"/><rect x="830" y="771" width="9" height="9" fill="#c3daf4"/><rect x="839" y="771" width="9" height="9" fill="#a3c7ee"/><rect x="848" y="771" width="9" height="9" fill="#c3daf4"/><rect x="857" y="771" width="9" height="9" fill="#c3daf4"/><rect x="857" y="762" width="9" height="9" fill="#fff"/><rect x="794" y="806" width="9" height="9" fill="#bddabd"/><rect x="803" y="806" width="9" height="9" fill="#eff6ef"/><rect x="794" y="815" width="9" height="9" fill="#5fa95f"/><rect x="803" y="815" width="9" height="9" fill="#d4e6d4"/><rect x="812" y="815" width="9" height="9" fill="#f4f8fd"/><rect x="821" y="806" width="9" height="9" fill="#dce9f9"/><rect x="830" y="806" width="9" height="9" fill="#d6e6f8"/><rect x="839" y="806" width="9" height="9" fill="#e3eefb"/><rect x="848" y="806" width="9" height="9" fill="#d6e6f8"/><rect x="857" y="806" width="9" height="9" fill="#eef4fc"/><rect x="821" y="815" width="9" height="9" fill="#b6d3f2"/><rect x="830" y="815" width="9" height="9" fill="#92bdea"/><rect x="839" y="815" width="9" height="9" fill="#abcbef"/><rect x="848" y="815" width="9" height="9" fill="#b6d3f2"/><rect x="857" y="815" width="9" height="9" fill="#c3daf4"/><rect x="794" y="851" width="9" height="9" fill="#bddabd"/><rect x="803" y="851" width="9" height="9" fill="#eff6ef"/><rect x="794" y="860" width="9" height="9" fill="#5fa95f"/><rect x="803" y="860" width="9" height="9" fill="#d4e6d4"/><rect x="812" y="851" width="9" height="18" fill="#f8fafe"/><rect x="821" y="851" width="9" height="9" fill="#d6e6f8"/><rect x="830" y="851" width="9" height="9" fill="#eef4fc"/><rect x="839" y="851" width="9" height="9" fill="#cce0f6"/><rect x="848" y="851" width="9" height="9" fill="#eef4fc"/><rect x="857" y="851" width="9" height="9" fill="#c4dbf4"/><rect x="866" y="851" width="9" height="9" fill="#e3eefb"/><rect x="821" y="860" width="9" height="9" fill="#a3c7ee"/><rect x="830" y="860" width="9" height="9" fill="#c3daf4"/><rect x="839" y="860" width="9" height="9" fill="#c3daf4"/><rect x="848" y="860" width="9" height="9" fill="#9cc3ec"/><rect x="857" y="860" width="9" height="9" fill="#b6d3f2"/><rect x="866" y="860" width="9" height="9" fill="#92bdea"/><rect x="875" y="860" width="9" height="9" fill="#d6e6f8"/><rect x="884" y="860" width="9" height="9" fill="#eef4fc"/><rect x="803" y="896" width="9" height="9" fill="#eff6ef"/><rect x="803" y="905" width="9" height="9" fill="#d4e6d4"/><rect x="812" y="896" width="9" height="18" fill="#f8fafe"/><rect x="821" y="896" width="9" height="9" fill="#c4dbf4"/><rect x="830" y="896" width="9" height="9" fill="#d6e6f8"/><rect x="839" y="896" width="9" height="9" fill="#eef4fc"/><rect x="848" y="896" width="9" height="9" fill="#d6e6f8"/><rect x="857" y="896" width="9" height="9" fill="#eef4fc"/><rect x="866" y="896" width="9" height="9" fill="#e3eefb"/><rect x="875" y="896" width="9" height="9" fill="#dce9f9"/><rect x="884" y="896" width="9" height="9" fill="#c4dbf4"/><rect x="821" y="905" width="9" height="9" fill="#c3daf4"/><rect x="830" y="905" width="9" height="9" fill="#abcbef"/><rect x="839" y="905" width="9" height="9" fill="#92bdea"/><rect x="848" y="905" width="9" height="9" fill="#abcbef"/><rect x="857" y="905" width="9" height="9" fill="#c3daf4"/><rect x="866" y="905" width="9" height="9" fill="#abcbef"/><rect x="875" y="905" width="9" height="9" fill="#92bdea"/><rect x="884" y="905" width="9" height="9" fill="#92bdea"/></svg>
<div class="a" style="left:794px;top:722px;width:11px;height:11px;border-radius:50%;background:#107c10"></div>
<div class="a" style="left:794px;top:767px;width:11px;height:11px;border-radius:50%;background:#107c10"></div>
<div class="t " style="left:820px;top:765px;font-size:14px;color:#0f6cbd;">音</div>
<div class="t " style="left:870px;top:765px;font-size:14px;color:#0f6cbd;">026</div>
<div class="t " style="left:876px;top:855px;font-size:14px;color:#0f6cbd;">增</div>
<div class="a" style="left:794px;top:901px;width:11px;height:11px;border-radius:50%;background:#107c10"></div>
<div class="t " style="left:897px;top:901px;font-size:14px;color:#0f6cbd;">...</div>
<div class="a" style="left:785px;top:945px;width:138px;height:33px;border:1px solid #d1d1d1;border-radius:4px;background:#fff"></div>
<div class="t b" style="left:798px;top:954px;font-size:14px;color:#242424;font-weight:600">查看所有广告活动</div>
<div class="t " style="left:1027px;top:953px;font-size:14px;color:#424242;">第 1 个，共 2 个</div>
<svg style="left:1138px;top:953px" width="9" height="15" viewBox="0 0 9 15" fill="none" stroke="#c7c7c7" stroke-width="1.100" stroke-linecap="round" stroke-linejoin="round"><path d="M7 1.500 L1.500 7.200 L7 12.900"/></svg>
<svg style="left:1171px;top:953px" width="9" height="15" viewBox="0 0 9 15" fill="none" stroke="#616161" stroke-width="1.100" stroke-linecap="round" stroke-linejoin="round"><path d="M2 1.500 L7.500 7.200 L2 12.900"/></svg>

<div class="card" style="left:1219px;top:617px;width:439px;height:377px"></div>
<div class="t b" style="left:1239px;top:637px;font-size:14px;color:#242424;">最新变化：广告活动</div>
<div class="t " style="left:1537px;top:638px;font-size:12px;color:#424242;">所有更改</div>
<svg style="left:1592px;top:643px" width="8" height="5" viewBox="0 0 8 5" fill="none" stroke="#424242" stroke-width="1" stroke-linecap="round" stroke-linejoin="round"><path d="M.7 .7 L4 4 L7.300 .7"/></svg>
<div class="t " style="left:1619px;top:634px;font-size:16px;color:#242424;letter-spacing:.3px">...</div>
<div class="t " style="left:1235px;top:679px;font-size:10px;color:#424242;letter-spacing:.12px">相比于上一期 (2026/3/5 - 2026/3/15)</div>
<svg style="left:1404px;top:677px" width="15" height="15" viewBox="0 0 15 15" fill="none" stroke="#424242" stroke-width="1"><circle cx="7.500" cy="7.500" r="6.500"/><path d="M7.500 6.500 V10.500" stroke-linecap="round"/><circle cx="7.500" cy="4.500" r=".7" fill="#424242" stroke="none"/></svg>
<div class="t b" style="left:1568px;top:678px;font-size:12px;color:#242424;">点击</div>
<svg style="left:1603px;top:681px" width="13" height="8" viewBox="0 0 13 8" fill="none" stroke="#616161" stroke-width="1" stroke-linecap="round" stroke-linejoin="round"><path d="M.7 .8 L6.500 6.600 L12.300 .8"/></svg>
<div class="a" style="left:1353px;top:699px;width:113px;height:47px;background:#f4f4f4"></div>
<div class="a" style="left:1353px;top:748px;width:113px;height:47px;background:#f4f4f4"></div>
<div class="a" style="left:1353px;top:797px;width:113px;height:47px;background:#f4f4f4"></div>
<div class="a" style="left:1353px;top:846px;width:113px;height:47px;background:#f4f4f4"></div>
<div class="a" style="left:1353px;top:895px;width:113px;height:48px;background:#f4f4f4"></div>
<div class="a" style="left:1409px;top:699px;width:1px;height:244px;background:#d6d6d6"></div>
<div class="hl" style="left:1235px;top:745px;width:118px;background:#dcdcdc"></div>
<div class="hl" style="left:1466px;top:745px;width:176px;background:#dcdcdc"></div>
<div class="hl" style="left:1235px;top:794px;width:118px;background:#dcdcdc"></div>
<div class="hl" style="left:1466px;top:794px;width:176px;background:#dcdcdc"></div>
<div class="hl" style="left:1235px;top:843px;width:118px;background:#dcdcdc"></div>
<div class="hl" style="left:1466px;top:843px;width:176px;background:#dcdcdc"></div>
<div class="hl" style="left:1235px;top:892px;width:118px;background:#dcdcdc"></div>
<div class="hl" style="left:1466px;top:892px;width:176px;background:#dcdcdc"></div>
<div class="hl" style="left:1235px;top:941px;width:118px;background:#dcdcdc"></div>
<div class="hl" style="left:1466px;top:941px;width:176px;background:#dcdcdc"></div>
<div class="a" style="left:1409px;top:711px;width:52px;height:24px;background:#0078d4"></div>
<div class="a" style="left:1409px;top:760px;width:41px;height:24px;background:#0078d4"></div>
<div class="a" style="left:1409px;top:809px;width:38px;height:24px;background:#0078d4"></div>
<div class="a" style="left:1409px;top:858px;width:36px;height:24px;background:#0078d4"></div>
<div class="a" style="left:1382px;top:907px;width:27px;height:24px;background:#632b6f"></div>
<svg style="left:1489px;top:713px" width="12" height="17" viewBox="0 0 12 17" fill="none" stroke="#0f6cbd" stroke-width="1" stroke-linecap="round" stroke-linejoin="round"><path d="M3.300 11.500 C3.300 9.800 .8 8.800 .8 5.800 A5.200 5.200 0 0 1 11.200 5.800 C11.200 8.800 8.700 9.800 8.700 11.500 Z"/><path d="M3.500 12.900 H8.500 V13.800 A2.500 2.500 0 0 1 3.500 13.800 Z"/><path d="M4.600 5 L6 7 L7.400 5 M6 7 V11" stroke-width=".8"/></svg>
<div class="t " style="left:1511px;top:716px;font-size:11.7px;color:#242424;">+4,063</div>
<div class="t " style="left:1580px;top:716px;font-size:11.7px;color:#242424;">+15.12%</div>
<svg style="left:1489px;top:762px" width="12" height="17" viewBox="0 0 12 17" fill="none" stroke="#0f6cbd" stroke-width="1" stroke-linecap="round" stroke-linejoin="round"><path d="M3.300 11.500 C3.300 9.800 .8 8.800 .8 5.800 A5.200 5.200 0 0 1 11.200 5.800 C11.200 8.800 8.700 9.800 8.700 11.500 Z"/><path d="M3.500 12.900 H8.500 V13.800 A2.500 2.500 0 0 1 3.500 13.800 Z"/><path d="M4.600 5 L6 7 L7.400 5 M6 7 V11" stroke-width=".8"/></svg>
<div class="t " style="left:1511px;top:765px;font-size:11.7px;color:#242424;">+3,259</div>
<div class="t " style="left:1580px;top:765px;font-size:11.7px;color:#242424;">+387.98%</div>
<svg style="left:1489px;top:811px" width="12" height="17" viewBox="0 0 12 17" fill="none" stroke="#0f6cbd" stroke-width="1" stroke-linecap="round" stroke-linejoin="round"><path d="M3.300 11.500 C3.300 9.800 .8 8.800 .8 5.800 A5.200 5.200 0 0 1 11.200 5.800 C11.200 8.800 8.700 9.800 8.700 11.500 Z"/><path d="M3.500 12.900 H8.500 V13.800 A2.500 2.500 0 0 1 3.500 13.800 Z"/><path d="M4.600 5 L6 7 L7.400 5 M6 7 V11" stroke-width=".8"/></svg>
<div class="t " style="left:1511px;top:814px;font-size:11.7px;color:#242424;">+3,017</div>
<div class="t " style="left:1580px;top:814px;font-size:11.7px;color:#242424;">+∞</div>
<div class="t " style="left:1511px;top:863px;font-size:11.7px;color:#242424;">+2,843</div>
<div class="t " style="left:1580px;top:863px;font-size:11.7px;color:#242424;">+37.20%</div>
<svg style="left:1489px;top:909px" width="12" height="17" viewBox="0 0 12 17" fill="none" stroke="#0f6cbd" stroke-width="1" stroke-linecap="round" stroke-linejoin="round"><path d="M3.300 11.500 C3.300 9.800 .8 8.800 .8 5.800 A5.200 5.200 0 0 1 11.200 5.800 C11.200 8.800 8.700 9.800 8.700 11.500 Z"/><path d="M3.500 12.900 H8.500 V13.800 A2.500 2.500 0 0 1 3.500 13.800 Z"/><path d="M4.600 5 L6 7 L7.400 5 M6 7 V11" stroke-width=".8"/></svg>
<div class="t " style="left:1511px;top:912px;font-size:11.7px;color:#242424;">-2,150</div>
<div class="t " style="left:1580px;top:912px;font-size:11.7px;color:#242424;">-46.54%</div>
<svg style="left:0;top:0" width="1693" height="1231"><rect x="1255" y="716" width="6" height="9" fill="#d4e6d4"/><rect x="1271" y="716" width="9" height="9" fill="#b6d3f2"/><rect x="1280" y="716" width="9" height="9" fill="#b6d3f2"/><rect x="1289" y="716" width="9" height="9" fill="#9cc3ec"/><rect x="1298" y="716" width="9" height="9" fill="#b6d3f2"/><rect x="1307" y="716" width="9" height="9" fill="#a3c7ee"/><rect opacity=".4" x="1271" y="725" width="9" height="9" fill="#eef4fc"/><rect opacity=".4" x="1280" y="725" width="9" height="9" fill="#cce0f6"/><rect opacity=".4" x="1289" y="725" width="9" height="9" fill="#eef4fc"/><rect opacity=".4" x="1298" y="725" width="9" height="9" fill="#dce9f9"/><rect opacity=".4" x="1307" y="725" width="9" height="9" fill="#cce0f6"/><rect opacity=".85" x="1289" y="763" width="9" height="9" fill="#c4dbf4"/><rect opacity=".85" x="1298" y="763" width="9" height="9" fill="#dce9f9"/><rect opacity=".85" x="1307" y="763" width="9" height="9" fill="#cce0f6"/><rect x="1271" y="772" width="9" height="9" fill="#eef4fc"/><rect x="1280" y="772" width="9" height="9" fill="#d6e6f8"/><rect x="1289" y="772" width="9" height="9" fill="#d6e6f8"/><rect x="1298" y="772" width="9" height="9" fill="#eef4fc"/><rect x="1307" y="772" width="9" height="9" fill="#dce9f9"/><rect x="1244" y="815" width="9" height="9" fill="#3f953f"/><rect x="1253" y="815" width="9" height="9" fill="#d4e6d4"/><rect x="1271" y="806" opacity=".55" width="9" height="9" fill="#e3eefb"/><rect x="1280" y="806" opacity=".55" width="9" height="9" fill="#cce0f6"/><rect x="1289" y="806" opacity=".55" width="9" height="9" fill="#e3eefb"/><rect x="1298" y="806" opacity=".55" width="9" height="9" fill="#dce9f9"/><rect x="1307" y="806" opacity=".55" width="9" height="9" fill="#dce9f9"/><rect x="1316" y="806" opacity=".55" width="9" height="9" fill="#d6e6f8"/><rect x="1325" y="806" opacity=".55" width="9" height="9" fill="#c4dbf4"/><rect x="1271" y="815" width="9" height="9" fill="#a3c7ee"/><rect x="1280" y="815" width="9" height="9" fill="#c3daf4"/><rect x="1289" y="815" width="9" height="9" fill="#c3daf4"/><rect x="1298" y="815" width="9" height="9" fill="#92bdea"/><rect x="1307" y="815" width="9" height="9" fill="#92bdea"/><rect x="1316" y="815" width="9" height="9" fill="#9cc3ec"/><rect x="1325" y="815" width="9" height="9" fill="#92bdea"/><rect opacity=".45" x="1271" y="824" width="9" height="9" fill="#eef4fc"/><rect opacity=".45" x="1280" y="824" width="9" height="9" fill="#dce9f9"/><rect opacity=".45" x="1289" y="824" width="9" height="9" fill="#eef4fc"/><rect x="1280" y="860" width="9" height="9" fill="#dce9f9"/><rect x="1289" y="860" width="9" height="9" fill="#d6e6f8"/><rect x="1298" y="860" width="9" height="9" fill="#d6e6f8"/><rect x="1307" y="860" width="9" height="9" fill="#cce0f6"/><rect x="1280" y="869" width="9" height="9" fill="#abcbef"/><rect x="1289" y="869" width="9" height="9" fill="#9cc3ec"/><rect x="1298" y="869" width="9" height="9" fill="#9cc3ec"/><rect x="1307" y="869" width="9" height="9" fill="#a3c7ee"/><rect x="1244" y="906" width="9" height="18" fill="#eef5ee" opacity=".8"/><rect x="1253" y="906" width="9" height="9" fill="#eff6ef"/><rect x="1253" y="915" width="9" height="9" fill="#d4e6d4"/><rect x="1271" y="906" width="9" height="9" fill="#d6e6f8"/><rect x="1280" y="906" width="9" height="9" fill="#c4dbf4"/><rect x="1289" y="906" width="9" height="9" fill="#c4dbf4"/><rect x="1298" y="906" width="9" height="9" fill="#cce0f6"/><rect x="1307" y="906" width="9" height="9" fill="#c4dbf4"/><rect x="1271" y="915" width="9" height="9" fill="#c3daf4"/><rect x="1280" y="915" width="9" height="9" fill="#9cc3ec"/><rect x="1289" y="915" width="9" height="9" fill="#abcbef"/><rect x="1298" y="915" width="9" height="9" fill="#92bdea"/><rect x="1307" y="915" width="9" height="9" fill="#9cc3ec"/></svg>
<div class="a" style="left:1244px;top:716px;width:11px;height:11px;border-radius:50%;background:#107c10"></div>
<div class="a" style="left:1244px;top:765px;width:11px;height:11px;border-radius:50%;background:#107c10"></div>
<div class="t " style="left:1270px;top:763px;font-size:14px;color:#0f6cbd;">其他</div>
<div class="a" style="left:1244px;top:863px;width:11px;height:11px;border-radius:50%;background:#107c10"></div>
<div class="t " style="left:1270px;top:861px;font-size:14px;color:#0f6cbd;">其</div>
<div class="a" style="left:1244px;top:912px;width:11px;height:11px;border-radius:50%;background:#107c10"></div>
<div class="a" style="left:1243px;top:906px;width:10px;height:10px;background:rgba(255,255,255,.78)"></div><div class="a" style="left:1253px;top:906px;width:9px;height:9px;background:#f2f8f2"></div><div class="a" style="left:1253px;top:915px;width:9px;height:9px;background:#d4e6d4"></div>
<div class="t " style="left:1283px;top:909px;font-size:13px;color:#0f6cbd;opacity:.55;height:7px;overflow:hidden">词</div>
<div class="a" style="left:1235px;top:954px;width:138px;height:33px;border:1px solid #d1d1d1;border-radius:4px;background:#fff"></div>
<div class="t b" style="left:1248px;top:963px;font-size:14px;color:#242424;font-weight:600">查看所有广告活动</div>
<div class="t " style="left:1477px;top:962px;font-size:14px;color:#424242;">第 1 个，共 2 个</div>
<svg style="left:1589px;top:962px" width="9" height="15" viewBox="0 0 9 15" fill="none" stroke="#c7c7c7" stroke-width="1.100" stroke-linecap="round" stroke-linejoin="round"><path d="M7 1.500 L1.500 7.200 L7 12.900"/></svg>
<svg style="left:1622px;top:962px" width="9" height="15" viewBox="0 0 9 15" fill="none" stroke="#616161" stroke-width="1.100" stroke-linecap="round" stroke-linejoin="round"><path d="M2 1.500 L7.500 7.200 L2 12.900"/></svg>

<div class="card" style="left:319px;top:1006px;width:438px;height:260px"></div>
<div class="t b" style="left:339px;top:1026px;font-size:14px;color:#242424">转化跟踪</div>
<div class="t" style="left:718px;top:1023px;font-size:16px;color:#242424;letter-spacing:.3px">...</div>
<div class="a" style="left:335px;top:1061px;width:406px;height:170px;background:#deecf9"></div>
<svg style="left:0;top:0" width="1693" height="1231"><defs><linearGradient id="tg" x1="0" y1="0" x2="0" y2="1"><stop offset="0" stop-color="#ffffff"/><stop offset=".25" stop-color="#fbfdff"/><stop offset=".7" stop-color="#deecf9"/><stop offset="1" stop-color="#deecf9"/></linearGradient></defs>
<circle cx="538.8" cy="1148" r="56" fill="url(#tg)" stroke="#0f6cbd" stroke-width="14"/>
<g fill="none" stroke="#0f6cbd" stroke-width="4" stroke-linecap="round">
<path d="M538 1127 A23 23 0 1 0 558.2 1149"/>
<path d="M536 1137.500 A12.500 12.500 0 1 0 547.700 1151"/>
<path d="M535.2 1149.8 L548 1137" />
</g>
<circle cx="535.2" cy="1149.8" r="4.200" fill="#0f6cbd"/>
<path d="M550.3 1120.8 L553 1121.500 L553.2 1131.500 L564.500 1133.800 L556.800 1145 L545 1142 L540.800 1138 L540.800 1131.500 Z" fill="#0f6cbd" stroke="#0f6cbd" stroke-width="1.500" stroke-linejoin="round"/>
<path d="M546.300 1129 L549.500 1125.800 L549.800 1134.300 L558 1136 L554.800 1140.800 L546.300 1138.600 Z" fill="#e9f2fb"/>
</svg>

<div class="card" style="left:769px;top:1006px;width:438px;height:260px"></div>
<div class="t b" style="left:789px;top:1026px;font-size:14px;color:#242424;">关键词</div>
<div class="t " style="left:1168px;top:1023px;font-size:16px;color:#242424;letter-spacing:.3px">...</div>
<div class="t b" style="left:793px;top:1070px;font-size:14px;color:#242424;">关键词</div>
<div class="t b" style="left:958px;top:1070px;font-size:14px;color:#242424;">花费</div>
<svg style="left:990px;top:1074px" width="13" height="8" viewBox="0 0 13 8" fill="none" stroke="#616161" stroke-width="1" stroke-linecap="round" stroke-linejoin="round"><path d="M.7 .8 L6.500 6.600 L12.300 .8"/></svg>
<svg style="left:1012px;top:1072px" width="9" height="12" viewBox="0 0 9 12" fill="none" stroke="#616161" stroke-width="1" stroke-linecap="round" stroke-linejoin="round"><path d="M4.500 .8 V11 M.8 7.300 L4.500 11 L8.200 7.300"/></svg>
<div class="t b" style="left:1055px;top:1070px;font-size:14px;color:#242424;">点击</div>
<svg style="left:1087px;top:1074px" width="13" height="8" viewBox="0 0 13 8" fill="none" stroke="#616161" stroke-width="1" stroke-linecap="round" stroke-linejoin="round"><path d="M.7 .8 L6.500 6.600 L12.300 .8"/></svg>
<div class="t b" style="left:1135px;top:1070px;font-size:14px;color:#242424;">展示</div>
<svg style="left:1167px;top:1074px" width="13" height="8" viewBox="0 0 13 8" fill="none" stroke="#616161" stroke-width="1" stroke-linecap="round" stroke-linejoin="round"><path d="M.7 .8 L6.500 6.600 L12.300 .8"/></svg>
<div class="a" style="left:917px;top:1093px;width:113px;height:138px;background:#f5f5f5"></div>
<div class="hl" style="left:785px;top:1093px;width:406px;background:#dcdcdc"></div>
<div class="hl" style="left:785px;top:1138px;width:406px;background:#dcdcdc"></div>
<div class="hl" style="left:785px;top:1183px;width:406px;background:#dcdcdc"></div>
<div class="hl" style="left:785px;top:1228px;width:406px;background:#dcdcdc"></div>
<svg style="left:0;top:0" width="1693" height="1231"><rect x="803" y="1111" width="9" height="9" fill="#d4e6d4"/><rect x="821" y="1111" width="9" height="9" fill="#abcbef"/><rect x="830" y="1111" width="9" height="9" fill="#9cc3ec"/><rect x="839" y="1111" width="9" height="9" fill="#92bdea"/><rect x="848" y="1111" width="9" height="9" fill="#a3c7ee"/><rect x="857" y="1111" width="9" height="9" fill="#abcbef"/><rect x="866" y="1111" width="9" height="9" fill="#92bdea"/><rect opacity=".15" x="821" y="1120" width="9" height="9" fill="#e3eefb"/><rect opacity=".15" x="830" y="1120" width="9" height="9" fill="#eef4fc"/><rect opacity=".15" x="839" y="1120" width="9" height="9" fill="#d6e6f8"/><rect opacity=".15" x="848" y="1120" width="9" height="9" fill="#dce9f9"/><rect opacity=".15" x="857" y="1120" width="9" height="9" fill="#d6e6f8"/><rect opacity=".15" x="866" y="1120" width="9" height="9" fill="#e3eefb"/><rect x="794" y="1157" width="9" height="9" fill="#3f953f"/><rect x="803" y="1157" width="9" height="9" fill="#d4e6d4"/><rect x="821" y="1148" width="9" height="9" fill="#cce0f6"/><rect x="830" y="1148" width="9" height="9" fill="#e3eefb"/><rect x="839" y="1148" width="9" height="9" fill="#c4dbf4"/><rect x="848" y="1148" width="9" height="9" fill="#e3eefb"/><rect x="857" y="1148" width="9" height="9" fill="#dce9f9"/><rect x="866" y="1148" width="9" height="9" fill="#dce9f9"/><rect x="875" y="1148" width="9" height="9" fill="#dce9f9"/><rect x="821" y="1157" width="9" height="9" fill="#a3c7ee"/><rect x="830" y="1157" width="9" height="9" fill="#b6d3f2"/><rect x="839" y="1157" width="9" height="9" fill="#abcbef"/><rect x="848" y="1157" width="9" height="9" fill="#abcbef"/><rect x="857" y="1157" width="9" height="9" fill="#c3daf4"/><rect x="866" y="1157" width="9" height="9" fill="#92bdea"/><rect x="875" y="1157" width="9" height="9" fill="#b6d3f2"/><rect x="803" y="1202" width="9" height="9" fill="#d4e6d4"/><rect opacity=".9" x="821" y="1193" width="9" height="9" fill="#dce9f9"/><rect opacity=".9" x="830" y="1193" width="9" height="9" fill="#eef4fc"/><rect opacity=".9" x="839" y="1193" width="9" height="9" fill="#cce0f6"/><rect opacity=".9" x="848" y="1193" width="9" height="9" fill="#c4dbf4"/><rect opacity=".9" x="857" y="1193" width="9" height="9" fill="#dce9f9"/><rect opacity=".9" x="866" y="1193" width="9" height="9" fill="#cce0f6"/><rect opacity=".9" x="875" y="1193" width="9" height="9" fill="#c4dbf4"/><rect opacity=".9" x="821" y="1202" width="9" height="9" fill="#abcbef"/><rect opacity=".9" x="830" y="1202" width="9" height="9" fill="#b6d3f2"/><rect opacity=".9" x="839" y="1202" width="9" height="9" fill="#b6d3f2"/><rect opacity=".9" x="848" y="1202" width="9" height="9" fill="#a3c7ee"/><rect opacity=".9" x="857" y="1202" width="9" height="9" fill="#b6d3f2"/><rect opacity=".9" x="866" y="1202" width="9" height="9" fill="#b6d3f2"/><rect opacity=".9" x="875" y="1202" width="9" height="9" fill="#b6d3f2"/></svg>
<div class="a" style="left:794px;top:1111px;width:11px;height:11px;border-radius:50%;background:#107c10"></div>
<div class="a" style="left:794px;top:1201px;width:11px;height:11px;border-radius:50%;background:#107c10"></div>
<div class="t r " style="left:902px;width:120px;top:1111px;font-size:11.7px;color:#242424">¥ 5,466.00</div>
<div class="t r " style="left:983px;width:120px;top:1111px;font-size:11.7px;color:#242424">8,356</div>
<div class="t r " style="left:1063px;width:120px;top:1111px;font-size:11.7px;color:#242424">42,237</div>
<div class="t r " style="left:902px;width:120px;top:1156px;font-size:11.7px;color:#242424">¥ 2,746.75</div>
<div class="t r " style="left:983px;width:120px;top:1156px;font-size:11.7px;color:#242424">1,125</div>
<div class="t r " style="left:1063px;width:120px;top:1156px;font-size:11.7px;color:#242424">7,468</div>
<div class="t r " style="left:902px;width:120px;top:1201px;font-size:11.7px;color:#242424">¥ 1,243.12</div>
<div class="t r " style="left:983px;width:120px;top:1201px;font-size:11.7px;color:#242424">1,267</div>
<div class="t r " style="left:1063px;width:120px;top:1201px;font-size:11.7px;color:#242424">7,669</div>

<div class="card" style="left:1219px;top:1006px;width:439px;height:260px"></div>
<div class="t b" style="left:1240px;top:1026px;font-size:14px;color:#242424;">人们搜索了什么</div>
<div class="t " style="left:1619px;top:1023px;font-size:16px;color:#242424;letter-spacing:.3px">...</div>
<div class="t b" style="left:1244px;top:1070px;font-size:14px;color:#242424;">搜索词</div>
<div class="t b" style="left:1408px;top:1070px;font-size:14px;color:#242424;">花费</div>
<svg style="left:1440px;top:1074px" width="13" height="8" viewBox="0 0 13 8" fill="none" stroke="#616161" stroke-width="1" stroke-linecap="round" stroke-linejoin="round"><path d="M.7 .8 L6.500 6.600 L12.300 .8"/></svg>
<svg style="left:1462px;top:1072px" width="9" height="12" viewBox="0 0 9 12" fill="none" stroke="#616161" stroke-width="1" stroke-linecap="round" stroke-linejoin="round"><path d="M4.500 .8 V11 M.8 7.300 L4.500 11 L8.200 7.300"/></svg>
<div class="t b" style="left:1505px;top:1070px;font-size:14px;color:#242424;">点击</div>
<svg style="left:1537px;top:1074px" width="13" height="8" viewBox="0 0 13 8" fill="none" stroke="#616161" stroke-width="1" stroke-linecap="round" stroke-linejoin="round"><path d="M.7 .8 L6.500 6.600 L12.300 .8"/></svg>
<div class="t b" style="left:1585px;top:1070px;font-size:14px;color:#242424;">展示</div>
<svg style="left:1617px;top:1074px" width="13" height="8" viewBox="0 0 13 8" fill="none" stroke="#616161" stroke-width="1" stroke-linecap="round" stroke-linejoin="round"><path d="M.7 .8 L6.500 6.600 L12.300 .8"/></svg>
<div class="a" style="left:1368px;top:1093px;width:112px;height:138px;background:#f5f5f5"></div>
<div class="hl" style="left:1392px;top:1093px;width:250px;background:#dcdcdc"></div>
<div class="hl" style="left:1279px;top:1138px;width:363px;background:#dcdcdc"></div>
<div class="hl" style="left:1264px;top:1184px;width:378px;background:#dcdcdc"></div>
<div class="hl" style="left:1235px;top:1229px;width:407px;background:#dcdcdc"></div>
<div class="t r " style="left:1352px;width:120px;top:1111px;font-size:11.7px;color:#242424">¥ 1,088.66</div>
<div class="t r " style="left:1432px;width:120px;top:1111px;font-size:11.7px;color:#242424">1,145</div>
<div class="t r " style="left:1513px;width:120px;top:1111px;font-size:11.7px;color:#242424">5,490</div>
<div class="t r " style="left:1352px;width:120px;top:1156px;font-size:11.7px;color:#242424">¥ 830.55</div>
<div class="t r " style="left:1432px;width:120px;top:1156px;font-size:11.7px;color:#242424">6,644</div>
<div class="t r " style="left:1513px;width:120px;top:1156px;font-size:11.7px;color:#242424">11,045</div>
<div class="t r " style="left:1352px;width:120px;top:1202px;font-size:11.7px;color:#242424">¥ 823.34</div>
<div class="t r " style="left:1432px;width:120px;top:1202px;font-size:11.7px;color:#242424">6,587</div>
<div class="t r " style="left:1513px;width:120px;top:1202px;font-size:11.7px;color:#242424">10,927</div>
<svg style="left:0;top:0" width="1693" height="1231"><rect x="1244" y="1094" width="9" height="9" fill="#c4dbf4"/><rect x="1253" y="1094" width="9" height="9" fill="#e3eefb"/><rect x="1262" y="1094" width="9" height="9" fill="#d6e6f8"/><rect x="1271" y="1094" width="9" height="9" fill="#dce9f9"/><rect x="1280" y="1094" width="9" height="9" fill="#eef4fc"/><rect x="1289" y="1094" width="9" height="9" fill="#e3eefb"/><rect x="1298" y="1094" width="9" height="9" fill="#cce0f6"/><rect x="1307" y="1094" width="9" height="9" fill="#cce0f6"/><rect x="1316" y="1094" width="9" height="9" fill="#d6e6f8"/><rect x="1325" y="1094" width="9" height="9" fill="#e3eefb"/><rect x="1334" y="1094" width="9" height="9" fill="#dce9f9"/><rect x="1244" y="1103" width="9" height="9" fill="#c3daf4"/><rect x="1253" y="1103" width="9" height="9" fill="#92bdea"/><rect x="1262" y="1103" width="9" height="9" fill="#c3daf4"/><rect x="1271" y="1103" width="9" height="9" fill="#c3daf4"/><rect x="1280" y="1103" width="9" height="9" fill="#92bdea"/><rect x="1289" y="1103" width="9" height="9" fill="#b6d3f2"/><rect x="1298" y="1103" width="9" height="9" fill="#9cc3ec"/><rect x="1307" y="1103" width="9" height="9" fill="#c3daf4"/><rect x="1316" y="1103" width="9" height="9" fill="#c3daf4"/><rect x="1325" y="1103" width="9" height="9" fill="#9cc3ec"/><rect x="1334" y="1103" width="9" height="9" fill="#9cc3ec"/><rect opacity=".7" x="1244" y="1139" width="9" height="9" fill="#c4dbf4"/><rect opacity=".7" x="1253" y="1139" width="9" height="9" fill="#d6e6f8"/><rect opacity=".7" x="1262" y="1139" width="9" height="9" fill="#dce9f9"/><rect x="1244" y="1148" width="9" height="9" fill="#9cc3ec"/><rect x="1253" y="1148" width="9" height="9" fill="#c3daf4"/><rect opacity=".6" x="1244" y="1185" width="9" height="9" fill="#dce9f9"/><rect opacity=".6" x="1253" y="1185" width="9" height="9" fill="#dce9f9"/><rect opacity=".6" x="1262" y="1185" width="9" height="9" fill="#dce9f9"/><rect x="1244" y="1194" width="9" height="9" fill="#abcbef"/><rect x="1253" y="1194" width="9" height="9" fill="#a3c7ee"/><rect x="1244" y="1121" width="9" height="9" fill="#dcdcdc"/><rect x="1262" y="1121" width="9" height="9" fill="#e4e4e4"/><rect x="1244" y="1166" width="36" height="9" fill="#c4c4c4"/><rect x="1244" y="1166" width="9" height="9" fill="#e2e2e2"/><rect x="1253" y="1166" width="9" height="9" fill="#cecece"/><rect x="1262" y="1166" width="9" height="9" fill="#b4b4b4"/><rect x="1244" y="1211" width="36" height="9" fill="#c6c6c6"/><rect x="1262" y="1211" width="9" height="9" fill="#b8b8b8"/><rect x="1298" y="1211" width="18" height="9" fill="#ececec"/><rect x="1316" y="1211" width="27" height="9" fill="#c2c2c2"/><rect x="1325" y="1211" width="9" height="9" fill="#b4b4b4"/></svg>
<div class="t " style="left:1264px;top:1121px;font-size:11.5px;color:#424242;">添加</div>
<div class="t " style="left:1308px;top:1120px;font-size:11px;color:#424242;">—</div>
<div class="t " style="left:1328px;top:1120px;font-size:12px;color:#424242;">排除</div>
<div class="t " style="left:1300px;top:1166px;font-size:11px;color:#424242;">—</div>
<div class="t " style="left:1320px;top:1166px;font-size:12px;color:#424242;">排除</div>
<div class="t " style="left:1245px;top:1215px;font-size:11.5px;color:#424242;">已添加</div>
<div class="a" style="left:1244px;top:1211px;width:36px;height:9px;background:linear-gradient(90deg,#c6c6c6 0 50%,#b8b8b8 50% 75%,#c6c6c6 75%)"></div>

<div class="a" style="left:1285px;top:1157px;width:384px;height:50px;border-radius:9px;background:rgba(70,99,136,.89)"></div>
<div class="t" style="left:1302px;top:1173px;font-size:33px;color:#fff;letter-spacing:-.3px">水滴探海</div>
<div class="t b" style="left:1445px;top:1168px;font-size:33px;color:#fff;transform:scaleX(1.175);transform-origin:0 50%">SeaSeek AI</div>

</body>
</html>
